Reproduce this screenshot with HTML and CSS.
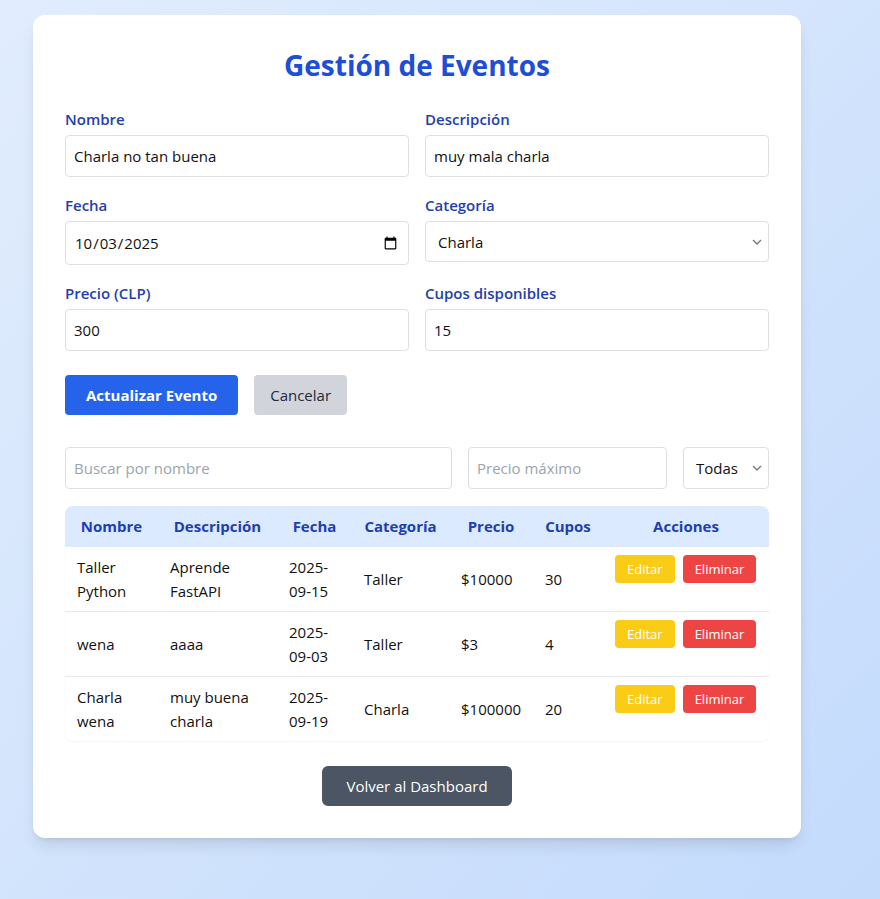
FILE: index.html
```html
<!DOCTYPE html>
<html lang="es">
<head>
<meta charset="utf-8">
<title>Gestión de Eventos</title>
<link rel="stylesheet" href="styles.css">
</head>
<body>
<main class="card">
  <h1 class="title">Gestión de Eventos</h1>
  <form class="form">
    <div class="grid">
      <div class="field">
        <label class="label">Nombre</label>
        <input class="input" type="text" value="Charla no tan buena">
      </div>
      <div class="field">
        <label class="label">Descripción</label>
        <input class="input" type="text" value="muy mala charla">
      </div>
      <div class="field">
        <label class="label">Fecha</label>
        <input class="input date" type="date" value="2025-10-03">
      </div>
      <div class="field">
        <label class="label">Categoría</label>
        <select class="input select">
          <option>Charla</option>
          <option>Taller</option>
        </select>
      </div>
      <div class="field">
        <label class="label">Precio (CLP)</label>
        <input class="input" type="number" value="300">
      </div>
      <div class="field">
        <label class="label">Cupos disponibles</label>
        <input class="input" type="number" value="15">
      </div>
    </div>
    <div class="actions">
      <button type="button" class="btn btn-primary">Actualizar Evento</button>
      <button type="button" class="btn btn-cancel">Cancelar</button>
    </div>
  </form>

  <div class="filters">
    <input class="input search" type="text" placeholder="Buscar por nombre">
    <input class="input price" type="number" placeholder="Precio máximo">
    <select class="input select cat">
      <option>Todas</option>
    </select>
  </div>

  <div class="table-wrap">
    <table class="table">
      <colgroup>
        <col class="c1"><col class="c2"><col class="c3"><col class="c4"><col class="c5"><col class="c6"><col class="c7">
      </colgroup>
      <thead>
        <tr>
          <th>Nombre</th><th>Descripción</th><th>Fecha</th><th>Categoría</th><th>Precio</th><th>Cupos</th><th>Acciones</th>
        </tr>
      </thead>
      <tbody>
        <tr>
          <td>Taller Python</td><td>Aprende FastAPI</td><td>2025-09-15</td><td>Taller</td><td>$10000</td><td>30</td>
          <td class="acts"><div class="act-row"><button class="sm sm-edit">Editar</button><button class="sm sm-del">Eliminar</button></div></td>
        </tr>
        <tr>
          <td>wena</td><td>aaaa</td><td>2025-09-03</td><td>Taller</td><td>$3</td><td>4</td>
          <td class="acts"><div class="act-row"><button class="sm sm-edit">Editar</button><button class="sm sm-del">Eliminar</button></div></td>
        </tr>
        <tr>
          <td>Charla wena</td><td>muy buena charla</td><td>2025-09-19</td><td>Charla</td><td>$100000</td><td>20</td>
          <td class="acts"><div class="act-row"><button class="sm sm-edit">Editar</button><button class="sm sm-del">Eliminar</button></div></td>
        </tr>
      </tbody>
    </table>
  </div>

  <div class="back">
    <button class="btn btn-back">Volver al Dashboard</button>
  </div>
</main>
</body>
</html>
```

FILE: styles.css
```css
* { box-sizing: border-box; }

html, body { margin: 0; }

body {
  min-height: 899px;
  background: linear-gradient(to bottom right, #e1edfd, #c4dbfc);
  font-family: "Open Sans", "Noto Sans", sans-serif;
  font-size: 15px;
  line-height: 24px;
  color: #111;
  padding: 15px 0 40px 33px;
}

.card {
  width: 768px;
  background: #fff;
  border-radius: 12px;
  padding: 32px;
  box-shadow: 0 10px 15px -3px rgba(0,0,0,0.1), 0 4px 6px -4px rgba(0,0,0,0.1);
}

.title {
  margin: 0 0 24px;
  text-align: center;
  font-size: 28px;
  line-height: 36px;
  font-weight: 700;
  color: #1d4ed8;
}

.grid {
  display: grid;
  grid-template-columns: 1fr 1fr;
  column-gap: 16px;
  row-gap: 16px;
}

.field { display: flex; flex-direction: column; }

.label {
  font-weight: 600;
  font-size: 15px;
  color: #1e40af;
  margin-bottom: 4px;
}

.input {
  font-family: inherit;
  font-size: 15px;
  line-height: 24px;
  padding: 8px;
  border: 1px solid #dcdfe4;
  border-radius: 4px;
  background-color: #fff;
  color: #111;
  height: 42px;
  width: 100%;
}
.input::placeholder { color: #9ca3af; }
.date { height: 44px; }
.select {
  height: 41px;
  padding-left: 12px;
  -webkit-appearance: none;
  appearance: none;
  background-image: url("data:image/svg+xml;utf8,<svg xmlns='http://www.w3.org/2000/svg' width='10' height='6' viewBox='0 0 10 6'><path d='M1 1l4 4 4-4' fill='none' stroke='%23767676' stroke-width='1.3'/></svg>");
  background-repeat: no-repeat;
  background-position: right 6px center;
  background-size: 10px 6px;
}

.actions {
  display: flex;
  gap: 16px;
  margin-top: 24px;
}

.btn {
  font-family: inherit;
  font-size: 15px;
  line-height: 24px;
  border: none;
  border-radius: 4px;
  padding: 8px 16px;
  cursor: pointer;
}
.btn-primary {
  background: #2563eb;
  color: #fff;
  font-weight: 700;
  padding: 8px 21px;
}
.btn-cancel {
  background: #d1d5db;
  color: #1f2937;
}

.filters {
  display: flex;
  gap: 16px;
  margin-top: 32px;
  margin-bottom: 17px;
}
.search { flex: 1; }
.price { width: 199px; flex: none; }
.cat { width: 86px; flex: none; height: 42px; }

.table-wrap {
  border-radius: 8px;
  overflow: hidden;
  box-shadow: 0 1px 2px rgba(0,0,0,0.05);
}

.table {
  width: 704px;
  border-collapse: collapse;
  table-layout: fixed;
}
.c1 { width: 93px; }
.c2 { width: 119px; }
.c3 { width: 75px; }
.c4 { width: 97px; }
.c5 { width: 84px; }
.c6 { width: 70px; }
.c7 { width: 166px; }

.table th {
  background: #dbeafe;
  color: #1e40af;
  font-weight: 700;
  padding: 8px 12px 9px;
  text-align: center;
}
.table td {
  padding: 8px 12px;
  vertical-align: middle;
  border-bottom: 1px solid #e5e7eb;
}
.table tbody tr:last-child td { border-bottom: none; }
.table td.acts { vertical-align: top; }

.act-row { display: flex; gap: 8px; }

.sm {
  font-family: inherit;
  font-size: 13px;
  line-height: 20px;
  padding: 4px 12px;
  border: none;
  border-radius: 4px;
  color: #fff;
}
.sm-edit { background: #facc15; }
.sm-del { background: #ef4444; }

.back {
  display: flex;
  justify-content: center;
  margin-top: 25px;
}
.btn-back {
  background: #4b5563;
  color: #fff;
  padding: 8px 24px;
  border-radius: 6px;
}
```
